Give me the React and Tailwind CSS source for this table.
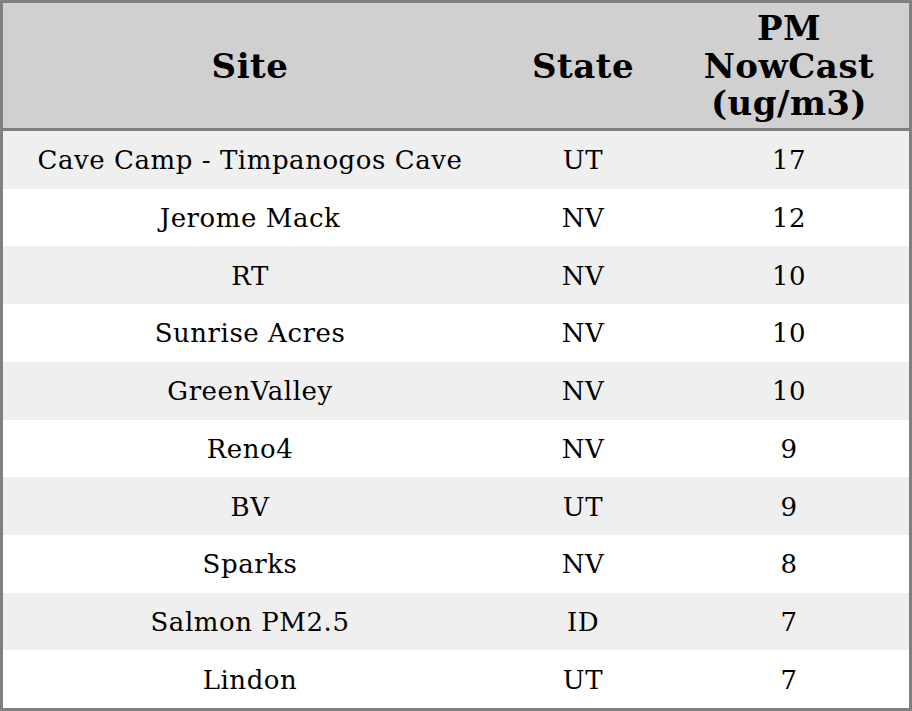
const rows = [
  ["Cave Camp - Timpanogos Cave", "UT", "17"],
  ["Jerome Mack", "NV", "12"],
  ["RT", "NV", "10"],
  ["Sunrise Acres", "NV", "10"],
  ["GreenValley", "NV", "10"],
  ["Reno4", "NV", "9"],
  ["BV", "UT", "9"],
  ["Sparks", "NV", "8"],
  ["Salmon PM2.5", "ID", "7"],
  ["Lindon", "UT", "7"],
];

export default function App() {
  return (
    <div
      className="w-[912px] h-[711px] border-[3px] border-[#808080] flex flex-col text-black"
      style={{ fontFamily: '"DejaVu Serif", serif' }}
    >
      <div className="h-[128px] shrink-0 grid grid-cols-[494px_172px_1fr] bg-[#d0d0d0] border-b-[3px] border-[#808080] text-[34px] font-bold leading-[37.5px] tracking-[0.5px] pt-[2px]">
        <div className="flex items-center justify-center">Site</div>
        <div className="flex items-center justify-center">State</div>
        <div className="flex items-center justify-center text-center">
          PM
          <br />
          NowCast
          <br />
          (ug/m3)
        </div>
      </div>
      <div className="flex-1 flex flex-col text-[26px] tracking-[0.55px]">
        {rows.map((r, i) => (
          <div
            key={i}
            className={`flex-1 grid grid-cols-[494px_172px_1fr] items-center text-center pt-[2px] ${
              i % 2 === 0 ? "bg-[#efefef]" : "bg-white"
            }`}
          >
            <div>{r[0]}</div>
            <div>{r[1]}</div>
            <div>{r[2]}</div>
          </div>
        ))}
      </div>
    </div>
  );
}
